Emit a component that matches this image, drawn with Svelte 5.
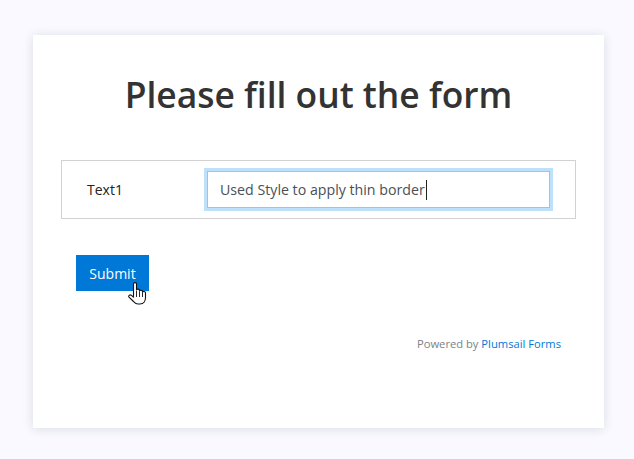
<script>
  let text = "Used Style to apply thin border";
</script>

<main class="card">
  <h1>Please fill out the form</h1>

  <div class="row">
    <label for="text1">Text1</label>
    <div class="field" id="text1"><span>{text}</span><i class="caret"></i></div>
  </div>

  <div class="actions">
    <button type="button">Submit</button>
    <!-- mouse pointer sits over the button -->
    <svg class="pointer" width="19" height="23" viewBox="0 0 19 23">
      <path
        d="M5.500 1.800C5.500.2 8.500.2 8.500 1.800V8C8.500 6.800 11.500 6.800 11.500 8.300V9C11.500 8 14.500 8 14.500 9.500V10.200C14.500 9.200 17.500 9.200 17.500 10.800V15.500C17.500 19 15.500 22 12 22H10C7.500 22 6.500 20.500 5 19L1 15.200C0 14 1.700 12.200 3.200 13.200L5.500 15.200Z"
        fill="#fff"
        stroke="#111"
        stroke-width="1.100"
        stroke-linejoin="round"
      />
      <path d="M8.500 9V15M11.500 9.500V15M14.500 10.500V15" stroke="#111" stroke-width=".9" fill="none" />
    </svg>
  </div>

  <p class="powered">Powered by <a href="#top">Plumsail Forms</a></p>
</main>

<style>
  :global(body) {
    margin: 0;
    min-height: 100vh;
    background: #f9f9ff;
    font-family: "Open Sans", "Noto Sans", sans-serif;
  }

  .card {
    box-sizing: border-box;
    width: 571px;
    height: 393px;
    margin: 35px 0 0 33px;
    padding: 34px 28px 0;
    background: #fff;
    box-shadow: 0 1px 10px rgba(40, 40, 70, 0.14);
    display: flow-root;
  }

  h1 {
    margin: 0 0 41px;
    text-align: center;
    font-size: 35.400px;
    line-height: 50px;
    font-weight: 600;
    color: #333;
  }

  .row {
    box-sizing: border-box;
    width: 515px;
    height: 59px;
    border: 1px solid #d2d2d2;
    display: flex;
    align-items: center;
    padding-left: 25px;
  }

  label {
    width: 120px;
    font-size: 14px;
    font-weight: 500;
    color: #222;
  }

  .field {
    box-sizing: border-box;
    width: 343px;
    height: 37px;
    border: 1px solid #8fc8f2;
    box-shadow: 0 0 0 3px #bde0fb;
    padding-left: 12px;
    display: flex;
    align-items: center;
    font-size: 14.200px;
    color: #495057;
  }

  .caret {
    width: 1px;
    height: 20px;
    background: #222;
    margin-left: 1px;
  }

  .actions {
    position: relative;
    margin: 36px 0 0 15px;
    width: 73px;
  }

  button {
    display: block;
    width: 73px;
    height: 36px;
    padding: 0;
    border: 0;
    background: #0078d7;
    color: #fff;
    font: inherit;
    font-size: 14px;
  }

  .pointer {
    position: absolute;
    left: 52px;
    top: 27px;
  }

  .powered {
    margin: 45px 15px 0 0;
    text-align: right;
    font-size: 11.200px;
    line-height: 16px;
    color: #7b8288;
  }

  a {
    color: #0078d7;
    text-decoration: none;
  }
</style>
